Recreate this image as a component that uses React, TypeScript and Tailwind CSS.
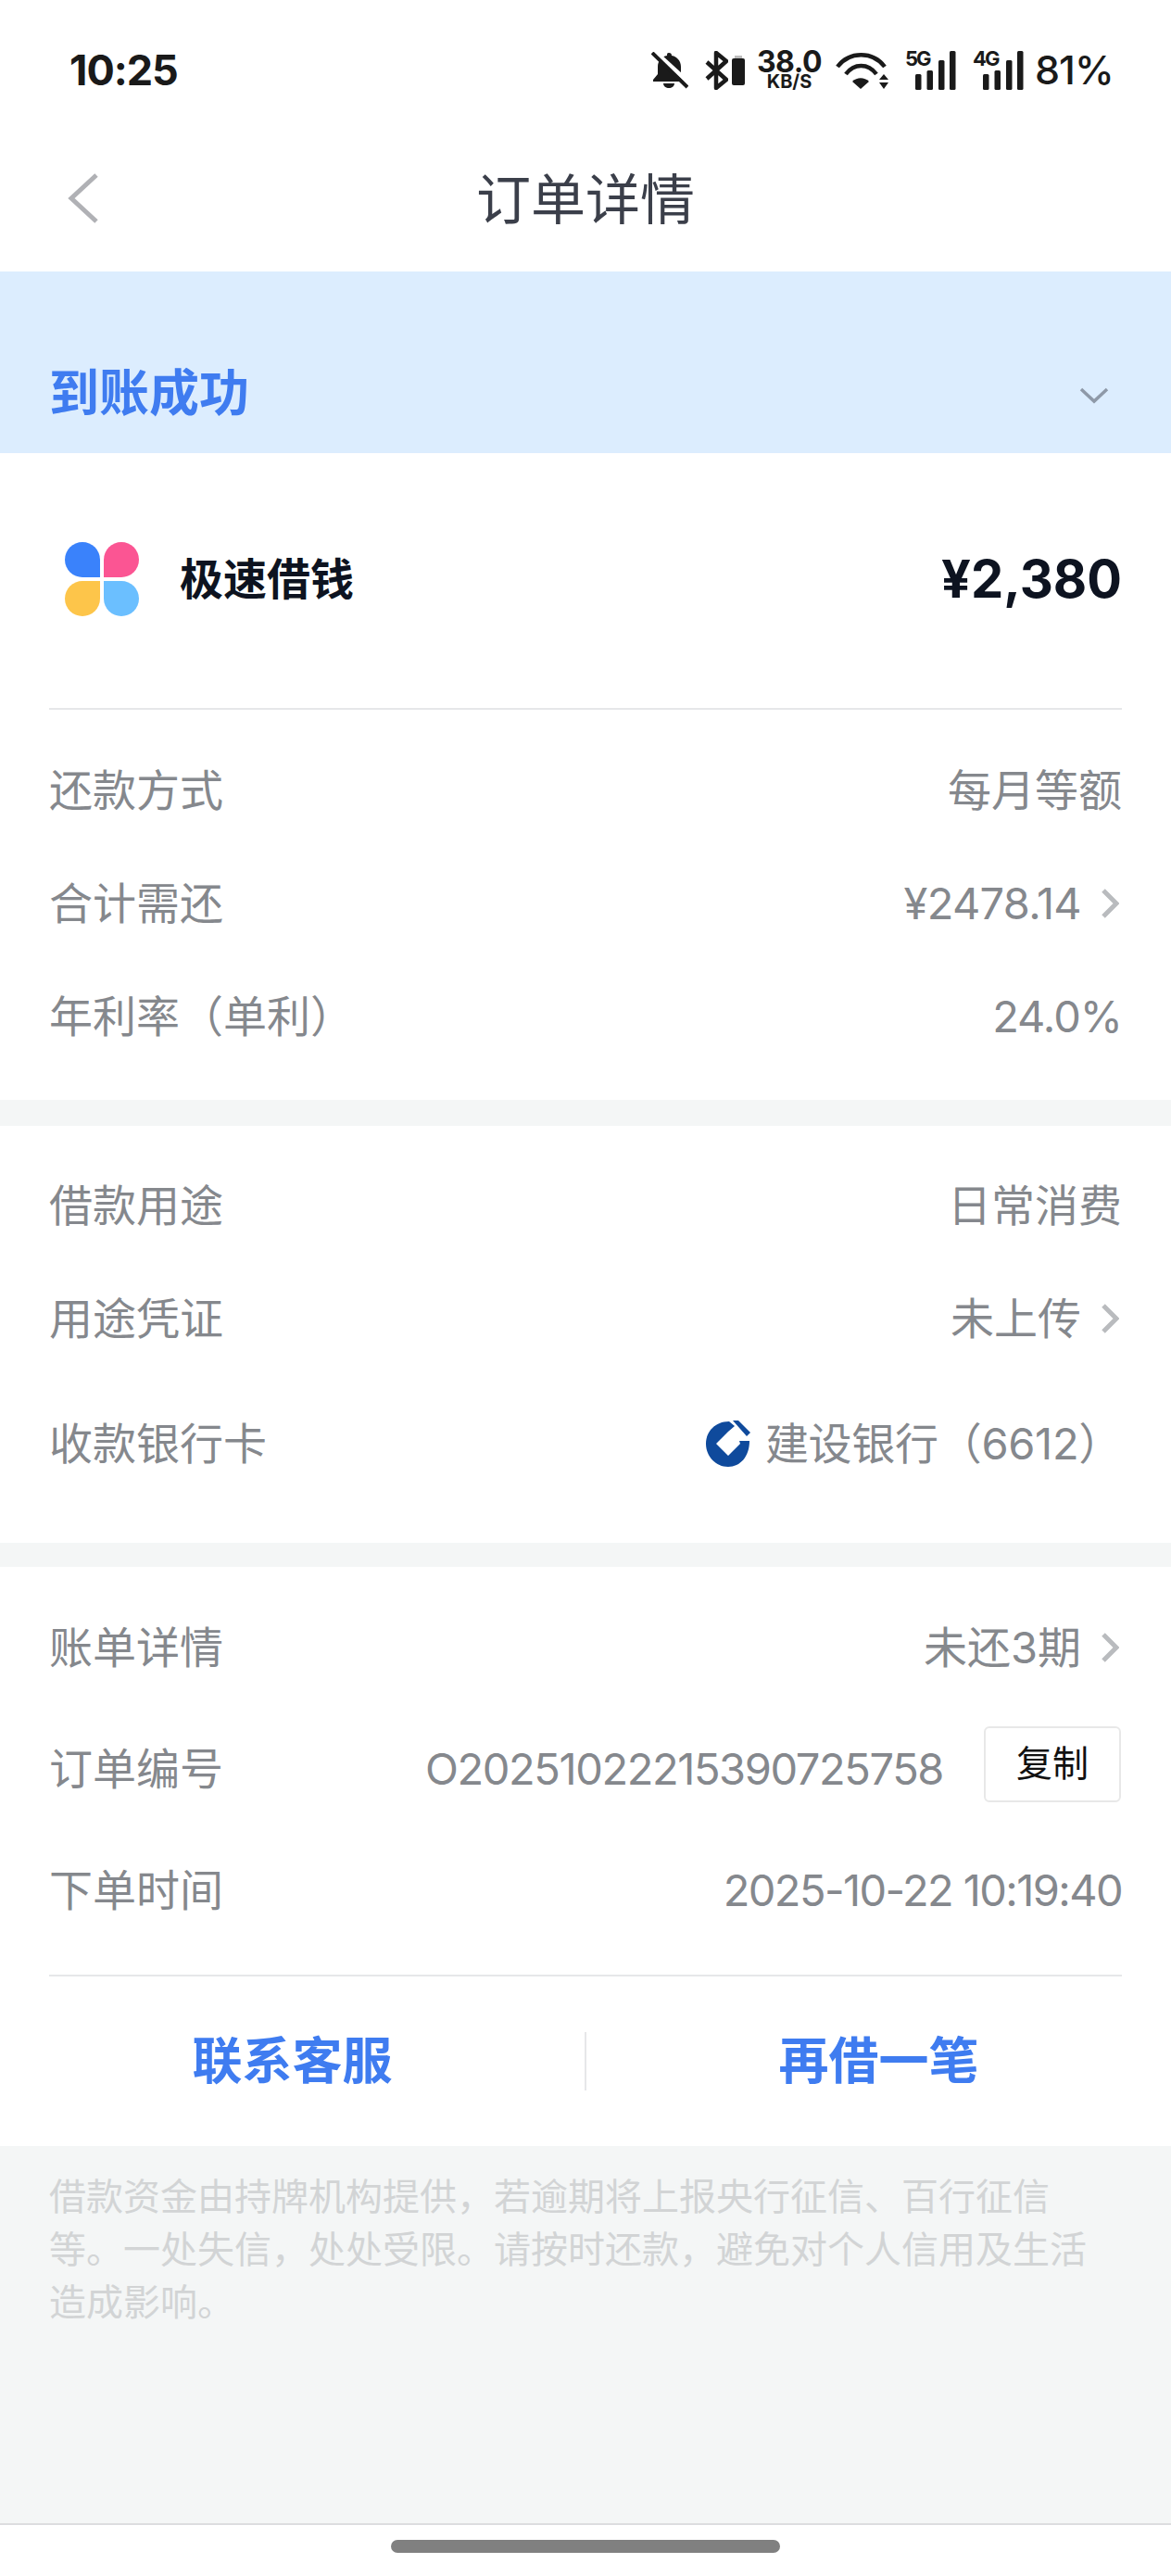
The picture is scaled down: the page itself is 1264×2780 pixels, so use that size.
const CJK = '"Inter", "Noto Sans CJK SC", sans-serif';

const Chevron = () => (
  <svg width="20" height="34" viewBox="0 0 20 34" fill="none" className="ml-[21px] mr-[3px] shrink-0">
    <path d="M3 3 L17 17 L3 31" stroke="#b9bbbe" strokeWidth="5" />
  </svg>
);

type RowProps = { label: string; value?: string; arrow?: boolean; className?: string; children?: React.ReactNode };

const Row = ({ label, value, arrow, className, children }: RowProps) => (
  <div className={`flex items-center justify-between text-[47px] text-[#85888d] ${className ?? 'h-[122px]'}`}>
    <span>{label}</span>
    {children ?? (
      <span className="flex items-center">
        <span>{value}</span>
        {arrow && <Chevron />}
      </span>
    )}
  </div>
);

const Signal = ({ tag }: { tag: string }) => (
  <div className="relative h-[42px] w-[55px]">
    <span className="absolute left-0 top-[-3px] text-[22px] font-bold leading-[22px] tracking-[-2px] text-[#1a1a1a]">{tag}</span>
    <svg width="55" height="42" viewBox="0 0 55 42" className="absolute left-0 top-0" fill="#1a1a1a">
      <rect x="11" y="25" width="6.5" height="17" rx="1.5" />
      <rect x="23.5" y="21" width="6.5" height="21" rx="1.5" />
      <rect x="36" y="10" width="6.5" height="32" rx="1.5" />
      <rect x="48" y="0" width="6.5" height="42" rx="1.5" />
    </svg>
  </div>
);

const StatusBar = () => (
  <div className="flex h-[137px] items-center justify-between pl-[75px] pr-[67px] pt-[14px] text-[#1a1a1a]">
    <span className="text-[45px] font-bold leading-none tracking-[-1px]">10:25</span>
    <div className="flex items-center">
      <svg width="40" height="40" viewBox="0 0 40 40" fill="#1a1a1a">
        <path d="M19 1c2 0 3 1 3 3 6 1 10 6 10 12v8l5 6v2H2v-2l5-6v-8c0-6 4-11 10-12 0-2 0-3 2-3z" />
        <path d="M13 34h12c0 3-3 5-6 5s-6-2-6-5z" />
        <path d="M4 0 L40 33" stroke="#fff" strokeWidth="5" />
        <path d="M1 1 L39 38" stroke="#1a1a1a" strokeWidth="4" />
      </svg>
      <svg width="25" height="42" viewBox="0 0 25 42" fill="none" className="ml-[18px]">
        <path d="M2 12 L23 31 L12 40 V2 L23 11 L2 30" stroke="#1a1a1a" strokeWidth="4.5" strokeLinejoin="round" />
      </svg>
      <div className="ml-[4px] flex h-[32px] w-[14px] flex-col">
        <div className="mx-auto h-[3px] w-[8px] bg-[#bdbdbd]" />
        <div className="flex-1 rounded-[2px] bg-[#1a1a1a]" />
      </div>
      <div className="ml-[14px] flex w-[68px] flex-col items-center font-bold">
        <span className="h-[24px] text-[32px] leading-[24px] tracking-[-0.5px]">38.0</span>
        <span className="mt-[2px] h-[15px] text-[20px] leading-[15px]">KB/S</span>
      </div>
      <svg width="58" height="42" viewBox="0 0 58 42" fill="none" className="ml-[15px]">
        <path d="M3 17 C16 0 41 0 54 17" stroke="#1a1a1a" strokeWidth="4.5" />
        <path d="M12 25 C21 13 36 13 45 25" stroke="#1a1a1a" strokeWidth="4.5" />
        <path d="M28 41 L19 33 C24 28 32 28 37 33 Z" fill="#1a1a1a" />
        <path d="M53 25 L58 31 H48 Z M48 34 H58 L53 41 Z" fill="#1a1a1a" />
      </svg>
      <div className="ml-[18px]">
        <Signal tag="5G" />
      </div>
      <div className="ml-[18px]">
        <Signal tag="4G" />
      </div>
      <span className="ml-[12px] w-[80px] text-[43px] font-medium leading-none tracking-[-1px]">81%</span>
    </div>
  </div>
);

const BankLogo = () => (
  <svg width="48" height="50" viewBox="0 0 48 50" className="mr-[16px] shrink-0">
    <path
      d="M25 1 C10 1 0 12 0 25 C0 39 11 50 24 50 C37 50 47 39 47 22 L36 22 L37 25 L24 38 L11 25 L24 12 L31 6 Z"
      fill="#0f4a9c"
    />
    <path d="M29 0 L35 0 L48 13 L44 17 Z" fill="#0f4a9c" />
  </svg>
);

const App = () => {
  return (
    <div className="flex h-[2780px] w-[1264px] flex-col bg-white" style={{ fontFamily: CJK }}>
      <StatusBar />

      <div className="relative flex h-[156px] items-center justify-center pt-[2px]">
        <svg width="34" height="54" viewBox="0 0 34 54" fill="none" className="absolute left-[73px] top-[50px]">
          <path d="M31 2 L4 27 L31 52" stroke="#b0b1b5" strokeWidth="5" />
        </svg>
        <span className="text-[59px] text-[#3b3f4a]">订单详情</span>
      </div>

      <div className="flex h-[196px] items-end justify-between bg-[#dcedfe] pb-[24px] pl-[53px] pr-[67px]">
        <span className="text-[54px] font-bold leading-[80px] text-[#3f7cf0]">到账成功</span>
        <svg width="32" height="20" viewBox="0 0 32 20" fill="none" className="mb-[28px]">
          <path d="M2 3 L16 16 L30 3" stroke="#8e99a8" strokeWidth="3.5" />
        </svg>
      </div>

      <div className="bg-white px-[53px]">
        <div className="flex h-[277px] items-center justify-between border-b-2 border-[#e6e7e9] pb-[3px]">
          <div className="flex items-center">
            <div className="ml-[17px] grid grid-cols-2 gap-[4px]">
              <div className="size-[38px] rounded-full rounded-br-[4px] bg-[#3a82fb]" />
              <div className="size-[38px] rounded-full rounded-bl-[4px] bg-[#fb5593]" />
              <div className="size-[38px] rounded-full rounded-tr-[4px] bg-[#fdc54a]" />
              <div className="size-[38px] rounded-full rounded-tl-[4px] bg-[#6bbfff]" />
            </div>
            <span className="ml-[44px] text-[47px] font-bold text-[#0d1320]">极速借钱</span>
          </div>
          <span className="text-[56px] font-bold text-[#0d1320]">¥2,380</span>
        </div>
        <div className="pb-[29px] pt-[26px]">
          <Row label="还款方式" value="每月等额" />
          <Row label="合计需还">
            <span className="flex items-center">
              <span className="tracking-[-0.7px]">¥2478.14</span>
              <Chevron />
            </span>
          </Row>
          <Row label="年利率（单利）">
            <span className="tracking-[-1px]">24.0%</span>
          </Row>
        </div>
      </div>

      <div className="h-[28px] bg-[#f4f6f6]" />

      <div className="bg-white px-[53px] pb-[33px] pt-[25px]">
        <Row label="借款用途" value="日常消费" />
        <Row label="用途凭证" value="未上传" arrow />
        <Row label="收款银行卡" className="h-[148px]">
          <span className="flex items-center">
            <BankLogo />
            <span className="tracking-[-0.3px]">建设银行（6612）</span>
          </span>
        </Row>
      </div>

      <div className="h-[26px] bg-[#f4f6f6]" />

      <div className="bg-white">
        <div className="mx-[53px] border-b-2 border-[#e6e7e9] pb-[30px] pt-[26px]">
          <Row label="账单详情" value="未还3期" arrow />
          <Row label="订单编号" className="h-[140px]">
            <span className="flex items-center">
              <span className="tracking-[-1.4px]">O20251022215390725758</span>
              <button className="mb-[11px] ml-[44px] mr-[1px] h-[82px] w-[148px] rounded-[6px] border-2 border-[#e8e8e8] text-[39px] text-[#111]">
                复制
              </button>
            </span>
          </Row>
          <Row label="下单时间">
            <span className="tracking-[-1.6px]">2025-10-22 10:19:40</span>
          </Row>
        </div>
        <div className="flex h-[183px] items-center text-[54px] font-bold text-[#3f7cf0]">
          <span className="flex-1 text-center">联系客服</span>
          <div className="h-[63px] w-[2px] bg-[#e6e7e9]" />
          <span className="flex-1 text-center">再借一笔</span>
        </div>
      </div>

      <div className="flex-1 border-b-2 border-[#dcdddf] bg-[#f4f6f6] px-[53px] pt-[26px] text-[40px] leading-[57px] text-[#d2d4d5]">
        借款资金由持牌机构提供，若逾期将上报央行征信、百行征信等。一处失信，处处受限。请按时还款，避免对个人信用及生活造成影响。
      </div>

      <div className="flex h-[55px] justify-center pt-[16px]">
        <div className="h-[14px] w-[420px] rounded-full bg-[#808080]" />
      </div>
    </div>
  );
};

export default App;
